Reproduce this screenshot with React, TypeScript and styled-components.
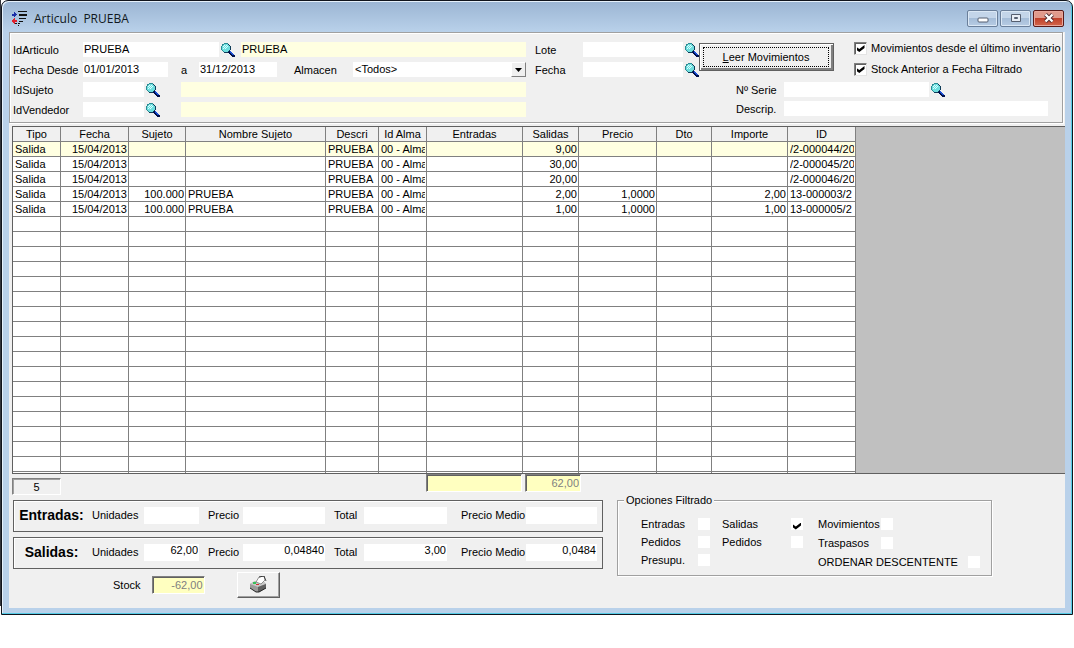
import React from "react";
import styled, { createGlobalStyle, css } from "styled-components";

const Global = createGlobalStyle`
  * { box-sizing: border-box; }
  body { margin: 0; background: #fff; }
  body, input, select, button, table {
    font: 11px/13px "Liberation Sans", Arial, sans-serif;
    color: #000;
  }
`;

const Shell = styled.div`
  width: fit-content;
  min-width: 100%;
  background: linear-gradient(#33353b, #33353b) left top / 1px 606px no-repeat, #fff;
  padding: 0 1px;
`;

const Window = styled.main`
  display: flex;
  flex-direction: column;
  min-width: 1072px;
  border: 1px solid #10141c;
  border-radius: 7px 7px 0 0;
  background: linear-gradient(#9bb5d3, #b9d1ea 31px, #b9d1ea);
  box-shadow: inset -1px -1px 0 #54cbe6, inset 1px 1px 0 #e6f1fb;
  padding: 0 7px 6px;
`;

const TitleBar = styled.header`
  display: flex;
  align-items: center;
  height: 31px;
  padding: 3px 1px 0 3px;
`;

const Title = styled.h1`
  flex: 1;
  margin: 1px 0 0 6px;
  font: 12px/16px "Open Sans", "Noto Sans", sans-serif;
  color: #101820;
  white-space: pre;
`;

const CaptionButtons = styled.div`
  display: flex;
  gap: 2px;
`;

const CaptionButton = styled.button<{ $close?: boolean }>`
  display: grid;
  place-items: center;
  width: 31px;
  height: 17px;
  padding: 0;
  border: 1px solid ${(p) => (p.$close ? "#5a1a18" : "#6a7f9a")};
  border-radius: 2px;
  box-shadow: inset 0 0 0 1px ${(p) => (p.$close ? "#e9a79b" : "#dbe8f5")};
  background: ${(p) =>
    p.$close
      ? "linear-gradient(#e09a8c 0 45%, #c0412b 50%, #d2664c)"
      : "linear-gradient(#c3d5e9 0 45%, #a5bdd8 50%, #b7cce4)"};
`;

const Client = styled.div`
  background: #f0f0f0;
  padding-bottom: 10px;
`;

const Filters = styled.form`
  display: flex;
  gap: 9px;
  margin-right: 2px;
  height: 91px;
  border: 1px solid #a0a0a0;
  box-shadow: inset 1px 1px 0 #fff, 1px 1px 0 #fff;
  padding: 9px 14px 0 3px;
`;

const FormRows = styled.div<{ $grow?: boolean }>`
  display: grid;
  grid-auto-rows: 15px;
  row-gap: 5px;
  align-content: start;
  ${(p) => p.$grow && "flex: 1;"}
`;

const Row = styled.div`
  display: flex;
  align-items: center;
`;

const Label = styled.label<{ $w?: number; $before?: number }>`
  flex: none;
  width: ${(p) => (p.$w ? `${p.$w}px` : "auto")};
  margin-left: ${(p) => p.$before ?? 0}px;
  padding-top: 1px;
  white-space: nowrap;
`;

const Field = styled.input<{ $w?: number; $tint?: boolean; $before?: number }>`
  height: 15px;
  min-width: 0;
  ${(p) => (p.$w ? `flex: none; width: ${p.$w}px;` : "flex: 1;")}
  margin: 0 0 0 ${(p) => p.$before ?? 0}px;
  border: 0;
  padding: 0 1px 1px;
  background: ${(p) => (p.$tint ? "#ffffe1" : "#fff")};
`;

const Picker = styled.div`
  position: relative;
  flex: 1;
  margin-left: 16px;
  height: 15px;
`;

const Select = styled.select`
  appearance: none;
  width: 100%;
  height: 15px;
  border: 0;
  padding: 0 16px 1px 2px;
  background: #fff;
  display: block;
`;

const PickerArrow = styled.span`
  position: absolute;
  right: 0;
  top: 0;
  display: grid;
  place-items: center;
  width: 15px;
  height: 15px;
  background: #f0f0f0;
  border: 1px solid;
  border-color: #fff #808080 #808080 #fff;
  pointer-events: none;
`;

const IconButton = styled.button`
  flex: none;
  display: block;
  width: 14px;
  height: 15px;
  margin-left: 2px;
  padding: 0;
  border: 0;
  background: none;

  svg { display: block; }
`;

const Side = styled.div`
  flex: none;
  width: 513px;
`;

const SideTop = styled.div`
  display: flex;
  height: 40px;
`;

const SideBottom = styled(FormRows)`
  row-gap: 4px;
  padding-left: 201px;
`;

const ReadButton = styled.button`
  flex: none;
  width: 135px;
  height: 28px;
  margin: 1px 0 0;
  padding: 2px;
  border: 1px solid #606060;
  box-shadow: inset 1px 1px 0 #fff, inset -2px -2px 0 #808080;
  background: #f0f0f0;

  span {
    display: block;
    margin: 1px 2px 2px 1px;
    border: 1px dotted #000;
    line-height: 18px;
  }
`;

const CheckRows = styled.div`
  display: grid;
  grid-auto-rows: 13px;
  row-gap: 8px;
  align-content: start;
  margin-left: 20px;
`;

const CheckLabel = styled.label`
  display: flex;
  align-items: center;
  gap: 4px;
  white-space: nowrap;
`;

const Check = styled.input.attrs({ type: "checkbox" })<{ $sunken?: boolean }>`
  appearance: none;
  flex: none;
  display: grid;
  place-items: center;
  width: ${(p) => (p.$sunken ? 13 : 12)}px;
  height: ${(p) => (p.$sunken ? 13 : 12)}px;
  margin: 0;
  background: #fff;
  ${(p) =>
    p.$sunken
      ? css`
          border: 1px solid;
          border-color: #808080 #e3e3e3 #e3e3e3 #808080;
          box-shadow: inset 1px 1px 0 #606060;
        `
      : css`
          padding-top: 4px;
        `}

  &:checked::after {
    content: "";
    width: 8px;
    height: 7px;
    background: #000;
    clip-path: polygon(0 29%, 35% 58%, 100% 0, 100% 43%, 35% 100%, 0 72%);
  }
`;

const Grid = styled.div`
  margin: 3px 0 0 3px;
  height: 348px;
  overflow: hidden;
  border: solid #606060;
  border-width: 1px 0 1px 1px;
  background: #c0c0c0;
`;

const Table = styled.table`
  width: 843px;
  table-layout: fixed;
  border-spacing: 0;
  background: #fff;
`;

const HeadCell = styled.th`
  height: 15px;
  padding: 0;
  border: solid #808080;
  border-width: 0 1px 1px 0;
  background: #f0f0f0;
  font-weight: normal;
  white-space: nowrap;
`;

const Cell = styled.td<{ $right?: boolean; $active?: boolean }>`
  height: 15px;
  padding: 0 1px 0 2px;
  border: solid #808080;
  border-width: 0 1px 1px 0;
  background: ${(p) => (p.$active ? "#ffffe1" : "#fff")};
  text-align: ${(p) => (p.$right ? "right" : "left")};
  white-space: nowrap;
`;

const CellText = styled.div`
  overflow: hidden;
`;

const TotalsRow = styled.div`
  display: flex;
  align-items: flex-start;
  height: 26px;
  padding-left: 3px;
`;

const Counter = styled.output`
  width: 49px;
  height: 17px;
  margin-top: 4px;
  border: 1px solid;
  border-color: #808080 #fff #fff #808080;
  box-shadow: inset 1px 1px 0 #a0a0a0;
  line-height: 16px;
  text-align: center;
`;

const TotalField = styled.input<{ $w: number; $before: number }>`
  width: ${(p) => p.$w}px;
  height: 18px;
  margin: 0 0 0 ${(p) => p.$before}px;
  border: 1px solid;
  border-color: #808080 #fff #fff #808080;
  box-shadow: inset 1px 1px 0 #606060;
  padding: 0 1px;
  background: #ffffc0;
  color: #808080;
  text-align: right;
`;

const Lower = styled.div`
  display: flex;
  align-items: flex-start;
  gap: 14px;
  padding-left: 4px;
`;

const Summaries = styled.div`
  display: grid;
  row-gap: 5px;
`;

const Summary = styled.section`
  display: flex;
  align-items: center;
  width: 590px;
  height: 32px;
  border: 1px solid #606060;
  box-shadow: inset 1px 1px 0 #fff;
  padding: 0 5px 2px;
`;

const SummaryTitle = styled.h2`
  width: 73px;
  margin: 0;
  font-size: 14px;
  line-height: 16px;
  text-align: center;
  padding-right: 8px;
  white-space: nowrap;
`;

const Amount = styled.input<{ $w: number; $after: number }>`
  flex: none;
  width: ${(p) => p.$w}px;
  height: 17px;
  margin: 0 ${(p) => p.$after}px 0 0;
  border: 0;
  padding: 0 1px 4px;
  background: #fff;
  text-align: right;
`;

const StockRow = styled.div`
  display: flex;
  align-items: center;
  height: 26px;
  padding-left: 100px;
  margin-top: -2px;
`;

const PrintButton = styled.button`
  display: grid;
  place-items: center;
  width: 43px;
  height: 26px;
  margin-left: 32px;
  padding: 0 0 2px;
  border: 1px solid;
  border-color: #fff #606060 #606060 #fff;
  box-shadow: inset -1px -1px 0 #a0a0a0;
  background: #f0f0f0;
`;

const Options = styled.fieldset`
  width: 375px;
  height: 82px;
  margin: -6px 0 0;
  border: 1px solid #a0a0a0;
  box-shadow: 1px 1px 0 #fff, inset 1px 1px 0 #fff;
  padding: 0 11px 0 23px;
  display: flex;

  legend {
    margin-left: -17px;
    padding: 0 2px;
    background: #f0f0f0;
  }
`;

const OptionColumn = styled.div<{ $w: number; $after: number; $loose?: boolean }>`
  display: grid;
  grid-auto-rows: 18px;
  row-gap: ${(p) => (p.$loose ? 1 : 0)}px;
  align-content: start;
  width: ${(p) => p.$w}px;
  margin: 8px ${(p) => p.$after}px 0 0;
`;

const Option = styled.label<{ $w?: number }>`
  display: flex;
  align-items: center;
  justify-content: space-between;
  width: ${(p) => (p.$w ? `${p.$w}px` : "auto")};
  white-space: nowrap;
`;

const Magnifier = () => (
  <svg width="14" height="14" viewBox="0 0 14 14" aria-hidden="true" shapeRendering="crispEdges">
    <path d="M3 0h4v1H3zM1 1h2v1H1zM0 3h1v4H0zM1 2h1v1H1zM1 7h1v1H1zM2 8h1v1H2z" fill="#2c8c94" />
    <path d="M7 1h1v1H7zM8 2h1v1H8zM9 3h1v4H9zM8 7h1v1H8zM7 8h1v1H7zM3 9h4v1H3z" fill="#103c58" />
    <path d="M3 1h4v1h1v1h1v4H8v1H7v1H3V8H2V7H1V3h1V2h1z" fill="#6fdede" />
    <path d="M3 2h1v1H3zM5 2h1v1H5zM2 3h1v1H2zM4 3h1v1H4zM6 3h1v1H6zM3 4h1v1H3zM5 4h1v1H5zM2 5h1v1H2zM4 5h1v1H4z" fill="#d6ffff" />
    <path d="M8 8h2v1h1v1h1v1h1v1h1v2h-3v-1h-1v-1H9v-1H8v-1H7V9h1z" fill="#00104c" />
    <path d="M9 8h1v1h1v1h1v1h1v1h-2v-1h-1v-1H9z" fill="#1c50d8" />
  </svg>
);

const AppIcon = () => (
  <svg width="16" height="15" viewBox="0 0 16 15" aria-hidden="true" shapeRendering="crispEdges">
    <path d="M6 0h9v1H6zM7 3h8v2H7zM7 7h7v1H7zM7 10h4v1H7zM3 12h2v1H3zM6 12h2v1H6zM6 14h1v1H6z" fill="#111" />
    <path d="M0 3h2V1h1v1h1v1h1v1H4v1H3v1H2V5H0z" fill="#1b2fa8" />
    <path d="M0 9h1V8h1V7h1v2h2v2H3v2H2v-1H1v-1H0z" fill="#e0202c" />
  </svg>
);

const Printer = () => (
  <svg width="18" height="17" viewBox="0 0 18 17" aria-hidden="true">
    <path d="M1 8 L6 5 H14 L17 8 V12 L10 16 L7 16 L1 12 Z" fill="#9a9a9a" />
    <path d="M1 8 L6 5 H14 L17 8 L9 11 Z" fill="#c8c8c8" />
    <path d="M9 11 L17 8 V12 L10 16 H9 Z" fill="#606060" />
    <path d="M1 12 L7 16 H10 L17 12" stroke="#222" fill="none" />
    <path d="M7 6 L10 1 L15 0 L16 4 L12 8 Z" fill="#fff" stroke="#777" strokeWidth="0.800" />
    <path d="M10 1 L15 0 L17 5" stroke="#222" strokeWidth="0.800" fill="none" />
    <path d="M4 6h3v2H4z" fill="#38c058" />
    <path d="M7 8h3v1H7z" fill="#d83030" />
  </svg>
);

const Lookup = ({ name }: { name: string }) => (
  <IconButton type="button" aria-label={name}>
    <Magnifier />
  </IconButton>
);

const columns: { name: string; width: number; right?: boolean }[] = [
  { name: "Tipo", width: 48 },
  { name: "Fecha", width: 68, right: true },
  { name: "Sujeto", width: 57, right: true },
  { name: "Nombre Sujeto", width: 140 },
  { name: "Descri", width: 53 },
  { name: "Id Alma", width: 48 },
  { name: "Entradas", width: 96, right: true },
  { name: "Salidas", width: 56, right: true },
  { name: "Precio", width: 78, right: true },
  { name: "Dto", width: 55, right: true },
  { name: "Importe", width: 76, right: true },
  { name: "ID", width: 68 },
];

const store = "00 - Alma";
const movements: string[][] = [
  ["Salida", "15/04/2013", "", "", "PRUEBA", store, "", "9,00", "", "", "", "/2-000044/20"],
  ["Salida", "15/04/2013", "", "", "PRUEBA", store, "", "30,00", "", "", "", "/2-000045/20"],
  ["Salida", "15/04/2013", "", "", "PRUEBA", store, "", "20,00", "", "", "", "/2-000046/20"],
  ["Salida", "15/04/2013", "100.000", "PRUEBA", "PRUEBA", store, "", "2,00", "1,0000", "", "2,00", "13-000003/2"],
  ["Salida", "15/04/2013", "100.000", "PRUEBA", "PRUEBA", store, "", "1,00", "1,0000", "", "1,00", "13-000005/2"],
];
const visibleRows = 23;

const SummaryLine = ({ id, title, values }: { id: string; title: string; values: string[] }) => (
  <Summary>
    <SummaryTitle>{title}</SummaryTitle>
    <Label $w={52} htmlFor={`${id}-u`}>Unidades</Label>
    <Amount id={`${id}-u`} $w={55} $after={9} defaultValue={values[0]} />
    <Label $w={35} htmlFor={`${id}-p`}>Precio</Label>
    <Amount id={`${id}-p`} $w={82} $after={9} defaultValue={values[1]} />
    <Label $w={30} htmlFor={`${id}-t`}>Total</Label>
    <Amount id={`${id}-t`} $w={83} $after={14} defaultValue={values[2]} />
    <Label $w={65} htmlFor={`${id}-m`}>Precio Medio</Label>
    <Amount id={`${id}-m`} $w={71} $after={0} defaultValue={values[3]} />
  </Summary>
);

export default function App() {
  return (
    <Shell>
      <Global />
      <Window>
        <TitleBar>
          <AppIcon />
          <Title>{"Articulo  PRUEBA"}</Title>
          <CaptionButtons>
            <CaptionButton aria-label="Minimizar">
              <svg width="12" height="10" viewBox="0 0 12 10"><rect x="1" y="5" width="10" height="4" rx="1" fill="#fff" stroke="#555f70" /></svg>
            </CaptionButton>
            <CaptionButton aria-label="Maximizar">
              <svg width="12" height="10" viewBox="0 0 12 10"><path d="M1.500 1.500h9v7h-9z" fill="#e8eef6" stroke="#555f70" /><path d="M4.500 4.500h3v1h-3z" fill="#a5bdd8" stroke="#555f70" /></svg>
            </CaptionButton>
            <CaptionButton $close aria-label="Cerrar">
              <svg width="12" height="10" viewBox="0 0 12 10"><path d="M2.500 1.500l7 7M9.500 1.500l-7 7" stroke="#4a2a30" strokeWidth="4" /><path d="M2.500 1.500l7 7M9.500 1.500l-7 7" stroke="#fff" strokeWidth="2.400" /></svg>
            </CaptionButton>
          </CaptionButtons>
        </TitleBar>

        <Client>
          <Filters onSubmit={(e) => e.preventDefault()}>
            <FormRows $grow>
              <Row>
                <Label $w={70} htmlFor="articulo">IdArticulo</Label>
                <Field id="articulo" $w={136} defaultValue="PRUEBA" />
                <Lookup name="Buscar artículo" />
                <Field aria-label="Nombre del artículo" $tint $before={6} defaultValue="PRUEBA" readOnly />
              </Row>
              <Row>
                <Label $w={70} htmlFor="desde">Fecha Desde</Label>
                <Field id="desde" $w={85} defaultValue="01/01/2013" />
                <Label $w={18} $before={13} htmlFor="hasta">a</Label>
                <Field id="hasta" $w={78} defaultValue="31/12/2013" />
                <Label $w={43} $before={17} htmlFor="almacen">Almacen</Label>
                <Picker>
                  <Select id="almacen" defaultValue="todos">
                    <option value="todos">&lt;Todos&gt;</option>
                  </Select>
                  <PickerArrow>
                    <svg width="7" height="4" viewBox="0 0 7 4"><path d="M0 0h7L3.500 4z" /></svg>
                  </PickerArrow>
                </Picker>
              </Row>
              <Row>
                <Label $w={70} htmlFor="sujeto">IdSujeto</Label>
                <Field id="sujeto" $w={61} />
                <Lookup name="Buscar sujeto" />
                <Field aria-label="Nombre del sujeto" $tint $before={21} readOnly />
              </Row>
              <Row>
                <Label $w={70} htmlFor="vendedor">IdVendedor</Label>
                <Field id="vendedor" $w={61} />
                <Lookup name="Buscar vendedor" />
                <Field aria-label="Nombre del vendedor" $tint $before={21} readOnly />
              </Row>
            </FormRows>

            <Side>
              <SideTop>
                <FormRows>
                  <Row>
                    <Label $w={48} htmlFor="lote">Lote</Label>
                    <Field id="lote" $w={100} />
                    <Lookup name="Buscar lote" />
                  </Row>
                  <Row>
                    <Label $w={48} htmlFor="fecha">Fecha</Label>
                    <Field id="fecha" $w={100} />
                    <Lookup name="Buscar fecha" />
                  </Row>
                </FormRows>
                <ReadButton type="submit">
                  <span><u>L</u>eer Movimientos</span>
                </ReadButton>
                <CheckRows>
                  <CheckLabel><Check $sunken defaultChecked />Movimientos desde el último inventario</CheckLabel>
                  <CheckLabel><Check $sunken defaultChecked />Stock Anterior a Fecha Filtrado</CheckLabel>
                </CheckRows>
              </SideTop>
              <SideBottom>
                <Row>
                  <Label $w={48} htmlFor="serie">Nº Serie</Label>
                  <Field id="serie" $w={145} />
                  <Lookup name="Buscar número de serie" />
                </Row>
                <Row>
                  <Label $w={48} htmlFor="descrip">Descrip.</Label>
                  <Field id="descrip" />
                </Row>
              </SideBottom>
            </Side>
          </Filters>

          <Grid>
            <Table>
              <colgroup>
                {columns.map((c) => <col key={c.name} width={c.width} />)}
              </colgroup>
              <thead>
                <tr>{columns.map((c) => <HeadCell key={c.name} scope="col">{c.name}</HeadCell>)}</tr>
              </thead>
              <tbody>
                {Array.from({ length: visibleRows }, (_, r) => (
                  <tr key={r}>
                    {columns.map((c, i) => (
                      <Cell key={c.name} $right={c.right} $active={r === 0}>
                        <CellText>{movements[r]?.[i]}</CellText>
                      </Cell>
                    ))}
                  </tr>
                ))}
              </tbody>
            </Table>
          </Grid>

          <TotalsRow>
            <Counter>5</Counter>
            <TotalField aria-label="Total entradas" $w={96} $before={365} disabled />
            <TotalField aria-label="Total salidas" $w={56} $before={3} defaultValue="62,00" disabled />
          </TotalsRow>

          <Lower>
            <Summaries>
              <SummaryLine id="entradas" title="Entradas:" values={["", "", "", ""]} />
              <SummaryLine id="salidas" title="Salidas:" values={["62,00", "0,04840", "3,00", "0,0484"]} />
              <StockRow>
                <Label htmlFor="stock">Stock</Label>
                <TotalField id="stock" $w={53} $before={11} defaultValue="-62,00" disabled />
                <PrintButton aria-label="Imprimir"><Printer /></PrintButton>
              </StockRow>
            </Summaries>

            <Options>
              <legend>Opciones Filtrado</legend>
              <OptionColumn $w={69} $after={12}>
                <Option>Entradas<Check /></Option>
                <Option>Pedidos<Check /></Option>
                <Option>Presupu.<Check /></Option>
              </OptionColumn>
              <OptionColumn $w={81} $after={15}>
                <Option>Salidas<Check defaultChecked /></Option>
                <Option>Pedidos<Check /></Option>
              </OptionColumn>
              <OptionColumn $w={162} $after={0} $loose>
                <Option $w={75}>Movimientos<Check /></Option>
                <Option $w={75}>Traspasos<Check /></Option>
                <Option>ORDENAR DESCENTENTE<Check /></Option>
              </OptionColumn>
            </Options>
          </Lower>
        </Client>
      </Window>
    </Shell>
  );
}
